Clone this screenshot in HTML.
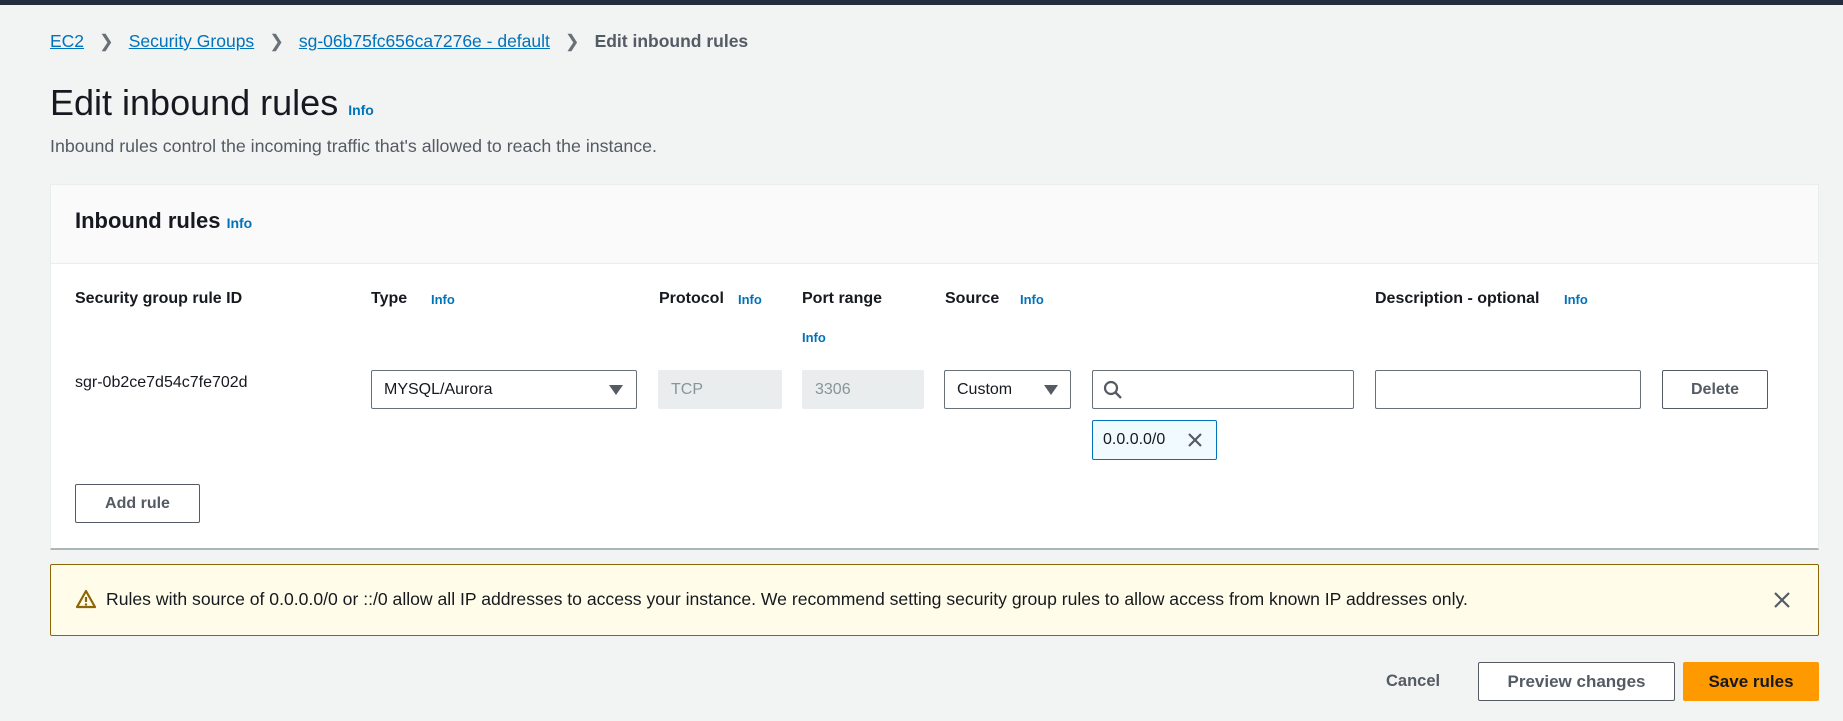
<!DOCTYPE html>
<html><head><meta charset="utf-8"><style>
*{box-sizing:border-box;margin:0;padding:0}
body{width:1843px;height:721px;background:#f2f3f3;font-family:"Liberation Sans",sans-serif;color:#16191f;position:relative;overflow:hidden}
.a{position:absolute}
a{color:#0073bb;text-decoration:underline}
.info{color:#0073bb;font-weight:bold;font-size:13px}
.lbl{font-weight:bold;font-size:16px;color:#16191f}
.inp{position:absolute;height:39px;border:1px solid #aab7b8;background:#fff;border-radius:2px;font-size:16px;padding:0 12px;line-height:37px}
.dis{background:#eaeded;border-color:#eaeded;color:#879596}
.btn{position:absolute;border:1px solid #545b64;background:#fff;border-radius:2px;font-weight:bold;font-size:16px;color:#545b64;text-align:center}
.tri{position:absolute;width:0;height:0;border-left:7px solid transparent;border-right:7px solid transparent;border-top:10px solid #545b64}
</style></head><body>
<div class="a" style="left:0;top:0;width:1843px;height:5px;background:#232f3e"></div>
<div class="a" style="left:50px;top:31px;font-size:17.5px;white-space:nowrap">
<a>EC2</a><span style="color:#687078;margin:0 15px">&#x276F;</span><a>Security Groups</a><span style="color:#687078;margin:0 15px">&#x276F;</span><a>sg-06b75fc656ca7276e - default</a><span style="color:#687078;margin:0 15px">&#x276F;</span><span style="color:#545b64;font-weight:bold">Edit inbound rules</span></div>
<div class="a" style="left:50px;top:82px;font-size:36px;white-space:nowrap">Edit inbound rules <span class="info" style="font-size:14px">Info</span></div>
<div class="a" style="left:50px;top:136px;font-size:17.8px;color:#545b64">Inbound rules control the incoming traffic that's allowed to reach the instance.</div>
<div class="a" style="left:50px;top:184px;width:1769px;height:366px;background:#fff;border:1px solid #eaeded;border-bottom:2px solid #aab7b8">
<div style="height:79px;background:#fafafa;border-bottom:1px solid #eaeded"></div></div>
<div class="a" style="left:75px;top:208px;font-size:22px;font-weight:bold">Inbound rules <span class="info" style="font-size:14px">Info</span></div>
<div class="a lbl" style="left:75px;top:290px">Security group rule ID</div>
<div class="a lbl" style="left:371px;top:290px">Type</div><div class="a info" style="left:431px;top:292px">Info</div>
<div class="a lbl" style="left:659px;top:290px">Protocol</div><div class="a info" style="left:738px;top:292px">Info</div>
<div class="a lbl" style="left:802px;top:290px">Port range</div><div class="a info" style="left:802px;top:330px">Info</div>
<div class="a lbl" style="left:945px;top:290px">Source</div><div class="a info" style="left:1020px;top:292px">Info</div>
<div class="a lbl" style="left:1375px;top:290px">Description - optional</div><div class="a info" style="left:1564px;top:292px">Info</div>
<div class="a" style="left:75px;top:374px;font-size:16px">sgr-0b2ce7d54c7fe702d</div>
<div class="inp" style="left:371px;top:370px;width:266px;border-color:#687078">MYSQL/Aurora</div><div class="tri" style="left:609px;top:385px"></div>
<div class="inp dis" style="left:658px;top:370px;width:124px">TCP</div>
<div class="inp dis" style="left:802px;top:370px;width:122px">3306</div>
<div class="inp" style="left:944px;top:370px;width:127px;border-color:#687078">Custom</div><div class="tri" style="left:1044px;top:385px"></div>
<div class="inp" style="left:1092px;top:370px;width:262px;border-color:#687078"></div>
<svg class="a" style="left:1103px;top:380px" width="20" height="20" viewBox="0 0 20 20"><circle cx="8" cy="8" r="6" fill="none" stroke="#545b64" stroke-width="2.2"/><path d="M12.5 12.5L18 18" stroke="#545b64" stroke-width="2.4"/></svg>
<div class="inp" style="left:1375px;top:370px;width:266px;border-color:#687078"></div>
<div class="btn" style="left:1662px;top:370px;width:106px;height:39px;line-height:37px">Delete</div>
<div class="a" style="left:1092px;top:420px;width:125px;height:40px;border:1px solid #0073bb;background:#f1faff;border-radius:2px;font-size:16px;padding-left:10px;line-height:38px">0.0.0.0/0</div>
<svg class="a" style="left:1187px;top:432px" width="16" height="16"><path d="M2 2L14 14M14 2L2 14" stroke="#545b64" stroke-width="2.2"/></svg>
<div class="btn" style="left:75px;top:484px;width:125px;height:39px;line-height:37px">Add rule</div>
<div class="a" style="left:50px;top:564px;width:1769px;height:72px;background:#fffce9;border:1px solid #8d6605;border-radius:2px"></div>
<svg class="a" style="left:75px;top:589px" width="22" height="20" viewBox="0 0 22 20"><path d="M11 2L20 18H2Z" fill="none" stroke="#8d6605" stroke-width="2.2" stroke-linejoin="round"/><path d="M11 8V13" stroke="#8d6605" stroke-width="2.2"/><circle cx="11" cy="15.5" r="1.2" fill="#8d6605"/></svg>
<div class="a" style="left:106px;top:589px;font-size:17.6px;white-space:nowrap">Rules with source of 0.0.0.0/0 or ::/0 allow all IP addresses to access your instance. We recommend setting security group rules to allow access from known IP addresses only.</div>
<svg class="a" style="left:1773px;top:591px" width="18" height="18"><path d="M2 2L16 16M16 2L2 16" stroke="#545b64" stroke-width="2.2"/></svg>
<div class="a" style="left:1386px;top:672px;font-size:16.5px;font-weight:bold;color:#545b64">Cancel</div>
<div class="btn" style="left:1478px;top:662px;width:197px;height:39px;line-height:37px;font-size:17px">Preview changes</div>
<div class="btn" style="left:1683px;top:662px;width:136px;height:39px;line-height:39px;background:#ff9900;border:none;color:#16191f;font-size:17px">Save rules</div>
</body></html>
